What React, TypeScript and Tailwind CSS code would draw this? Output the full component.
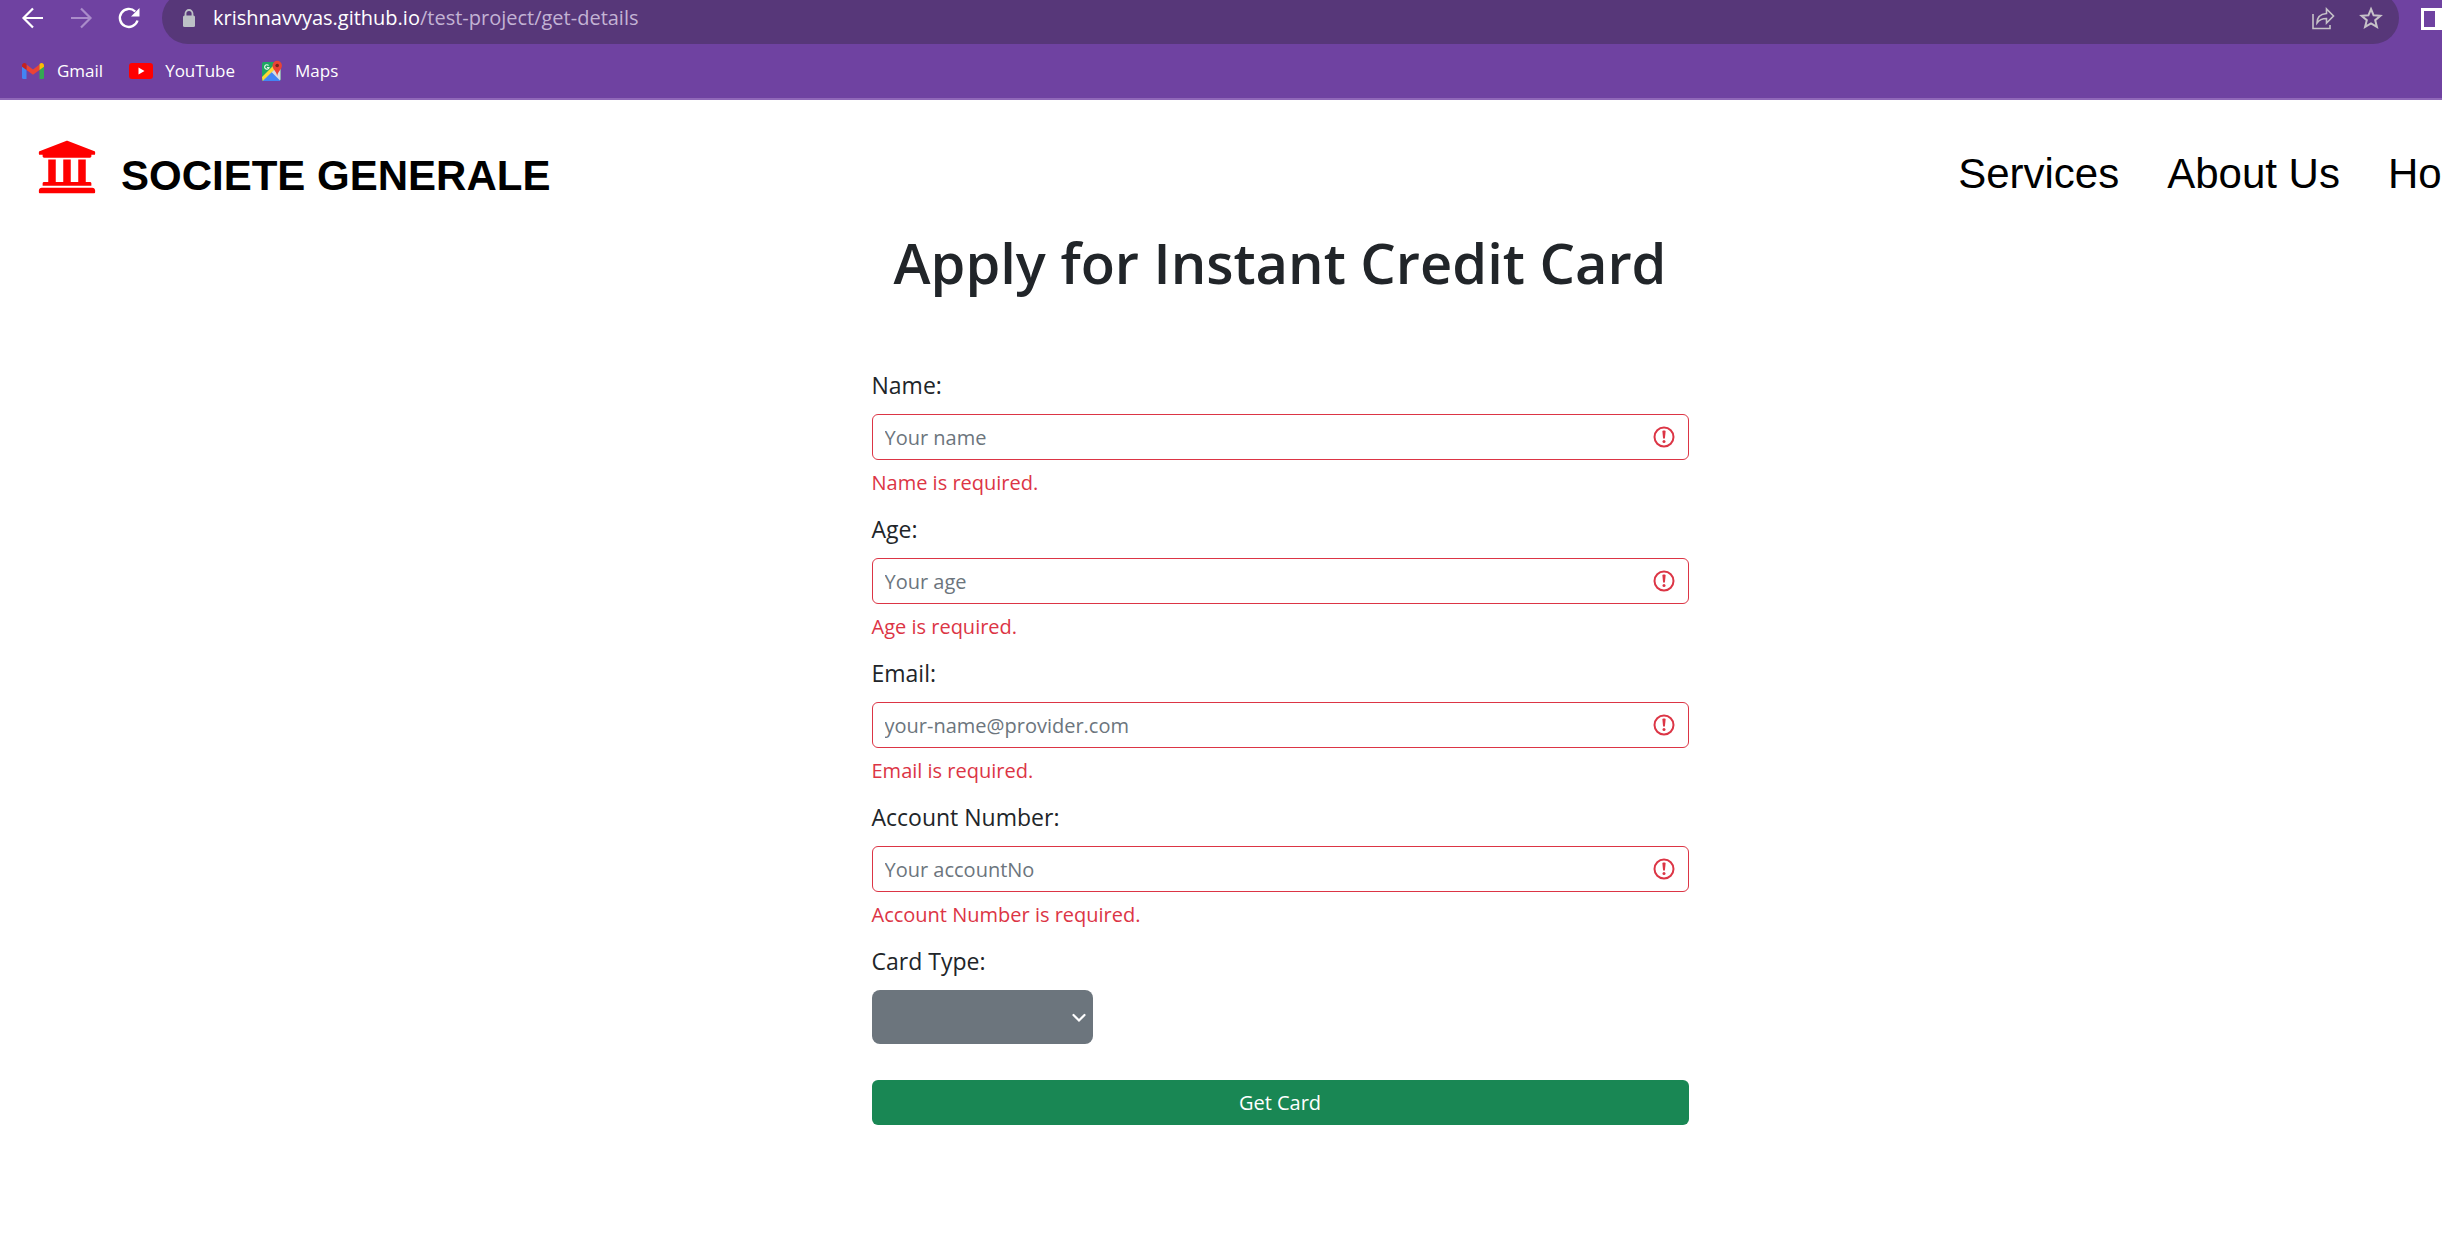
import React from "react";
import { FaUniversity } from "react-icons/fa";

const bookmarkText = "text-[17px] leading-6 text-white";

function BrowserBar() {
  return (
    <div className="h-[100px] overflow-hidden border-b-2 border-[#9068b8] bg-[#6f42a1] font-['Open_Sans',sans-serif]">
      <div className="flex h-11 items-end">
        <div className="flex h-[52px] w-[162px] shrink-0 items-center gap-6 pl-[21px]">
          <button aria-label="Back" className="h-6 w-6 shrink-0 text-white">
            <svg viewBox="0 0 24 24" fill="none" stroke="currentColor" strokeWidth="2.200">
              <path d="M22 12H3M12 2.500L2.500 12l9.500 9.500" />
            </svg>
          </button>
          <button aria-label="Forward" className="h-6 w-6 shrink-0 text-[#aa8cca]">
            <svg viewBox="0 0 24 24" fill="none" stroke="currentColor" strokeWidth="2.200">
              <path d="M2 12h19M12 2.500l9.500 9.500-9.500 9.500" />
            </svg>
          </button>
          <button aria-label="Reload" className="h-6 w-6 shrink-0 text-white">
            <svg viewBox="0 0 24 24" fill="none" stroke="currentColor" strokeWidth="2.400">
              <path d="M20.500 14.500A9 9 0 1 1 18.200 5.500" />
              <path d="M22.500 2v8.500H14z" fill="currentColor" stroke="none" />
            </svg>
          </button>
        </div>
        <div className="flex h-[52px] min-w-0 flex-1 items-center rounded-[26px] bg-[#573779] pl-[19px] pr-4">
          <svg className="h-5 w-4 shrink-0" viewBox="0 0 16 20">
            <path d="M4.500 9V5.500a3.500 3.500 0 0 1 7 0V9" fill="none" stroke="#bdc1c6" strokeWidth="1.800" />
            <rect x="2" y="7.500" width="12" height="11.500" rx="1.500" fill="#bdc1c6" />
          </svg>
          <div className="ml-4 flex-1 whitespace-nowrap text-[20px] leading-6 text-[#c3b3d4]">
            <span className="text-white">krishnavvyas.github.io</span>/test-project/get-details
          </div>
          <button aria-label="Share" className="mr-6 h-6 w-6 text-[#c6c2c8]">
            <svg viewBox="0 0 24 24" fill="none" stroke="currentColor" strokeWidth="1.600">
              <path d="M2 8v14.500h17V19" />
              <path d="M6 17c0-6 4-9 9.500-9.500V3l7 7-7 7v-4.500C11.500 12.500 8.500 13.500 6 17z" />
            </svg>
          </button>
          <button aria-label="Bookmark this page" className="h-6 w-6 text-[#c6c2c8]">
            <svg viewBox="0 0 24 24" fill="none" stroke="currentColor" strokeWidth="2">
              <path d="M12 3l2.600 6.300 6.800.5-5.200 4.400 1.700 6.700L12 17.300l-5.900 3.600 1.700-6.700L2.600 9.800l6.800-.5z" />
            </svg>
          </button>
        </div>
        <button aria-label="Side panel" className="mb-[14px] ml-[22px] h-[22px] w-[21px] shrink-0 text-white">
          <svg viewBox="0 0 21 22">
            <path fill="currentColor" fillRule="evenodd" d="M0 0h21v22H0zM3 3h11v16H3z" />
          </svg>
        </button>
      </div>
      <nav aria-label="Bookmarks" className="flex h-[53px] items-center gap-[26px] pl-[21px]">
        <a href="#gmail" className="flex items-center gap-3">
          <svg className="h-[18px] w-6" viewBox="0 0 24 18">
            <path d="M1 3.500l4.500 3.400V17H2.500A1.500 1.500 0 0 1 1 15.500z" fill="#4285f4" />
            <path d="M23 3.500l-4.500 3.400V17h3a1.500 1.500 0 0 0 1.500-1.500z" fill="#34a853" />
            <path d="M5.500 2.500L12 7.400l6.500-4.900v5.400L12 12.800 5.500 7.900z" fill="#ea4335" />
            <path d="M1 3.500C1 1 3.700.3 5.500 1.900v6L1 4.800z" fill="#c5221f" />
            <path d="M23 3.500c0-2.500-2.700-3.200-4.500-1.600v6L23 4.800z" fill="#fbbc04" />
          </svg>
          <span className={bookmarkText}>Gmail</span>
        </a>
        <a href="#youtube" className="flex items-center gap-3">
          <svg className="h-[18px] w-6" viewBox="0 0 24 18">
            <rect y="1" width="24" height="16" rx="3" fill="#f00" />
            <path d="M9.500 5.500v7l6-3.500z" fill="#fff" />
          </svg>
          <span className={bookmarkText}>YouTube</span>
        </a>
        <a href="#maps" className="flex items-center gap-3">
          <svg className="h-6 w-[22px]" viewBox="0 0 22 24">
            <rect x="1" y="3" width="18.500" height="19" rx="1.500" fill="#1fa463" />
            <path d="M2 21.500L19.500 4v16.500l-1 1.500H2z" fill="#dadce0" />
            <path d="M1.500 22L10.500 13 19.500 22z" fill="#4285f4" />
            <path d="M1 18L12 7l2.500 2.500L1.500 22z" fill="#fdd835" />
            <path d="M16.200 17c-.5-4.500-4.700-6.500-4.700-10.500a4.700 4.700 0 0 1 9.400 0c0 4-4.200 6-4.700 10.500z" fill="#ea4335" />
            <circle cx="16.200" cy="6.500" r="1.800" fill="#7b241c" />
            <path d="M7.500 6.500a2.200 2.200 0 1 0 .5 2H6" stroke="#e8f5e9" strokeWidth="1.200" fill="none" />
          </svg>
          <span className={bookmarkText}>Maps</span>
        </a>
      </nav>
    </div>
  );
}

function ErrorIcon() {
  return (
    <svg className="pointer-events-none absolute right-[14px] top-3 h-[22px] w-[22px]" viewBox="0 0 22 22" fill="#dc3545">
      <circle cx="11" cy="11" r="9.500" fill="none" stroke="#dc3545" strokeWidth="2" />
      <path d="M9.400 5.500q0-1 1-1h1.200q1 0 1 1l-.7 7h-1.800z" />
      <circle cx="11" cy="15.500" r="1.500" />
    </svg>
  );
}

const fields = [
  { id: "name", label: "Name", type: "text", hint: "Your name" },
  { id: "age", label: "Age", type: "text", hint: "Your age" },
  { id: "email", label: "Email", type: "email", hint: "your-name@provider.com" },
  { id: "account", label: "Account Number", type: "text", hint: "Your accountNo" },
];

const labelText = "block pb-3 text-[23px] leading-[34px]";

export default function App() {
  return (
    <div className="min-h-screen overflow-hidden bg-white">
      <BrowserBar />
      <div className="w-[calc(100%+118px)]">
        <header className="flex h-[108px] items-start justify-between pl-[37px] pt-[37px] font-['Liberation_Sans',Arial,sans-serif] text-black">
          <a href="#home" className="flex items-start gap-6">
            <FaUniversity className="h-[60px] w-[60px] text-[#f00]" />
            <span className="text-[42px] font-bold leading-[78px]">SOCIETE GENERALE</span>
          </a>
          <nav aria-label="Main" className="flex gap-12 pr-[60px] text-[42px] leading-[74px]">
            <a href="#services">Services</a>
            <a href="#about">About Us</a>
            <a href="#home">Home</a>
          </nav>
        </header>
        <main className="mx-auto w-[817px] max-w-full font-['Open_Sans',sans-serif] text-[#212529]">
          <h1 className="whitespace-nowrap pt-4 text-center text-[56px] font-semibold leading-[76px]">
            Apply for Instant Credit Card
          </h1>
          <form className="pt-[68px]" onSubmit={(e) => e.preventDefault()}>
            {fields.map((f) => (
              <div key={f.id} className="h-36">
                <label htmlFor={f.id} className={labelText}>
                  {f.label}:
                </label>
                <div className="relative">
                  <input
                    id={f.id}
                    type={f.type}
                    placeholder={f.hint}
                    className="block h-[46px] w-full rounded-md border border-[#dc3545] bg-white pl-3 pr-12 text-[20px] placeholder:text-[#6c757d]"
                  />
                  <ErrorIcon />
                </div>
                <p className="pt-2 text-[20px] leading-[30px] text-[#dc3545]">{f.label} is required.</p>
              </div>
            ))}
            <label htmlFor="card" className={labelText}>
              Card Type:
            </label>
            <div className="relative w-[221px]">
              <select id="card" defaultValue="" className="block h-[54px] w-full appearance-none rounded-lg bg-[#6c757d] px-3 text-[20px] text-white">
                <option value=""></option>
                <option value="visa">Visa</option>
                <option value="mastercard">Mastercard</option>
              </select>
              <svg className="pointer-events-none absolute right-[6px] top-5 h-4 w-4" viewBox="0 0 16 16" fill="none" stroke="#fff" strokeWidth="2.200" strokeLinecap="round">
                <path d="M2.500 5l5.500 5.500L13.500 5" />
              </svg>
            </div>
            <button type="submit" className="mt-9 block h-[45px] w-full rounded-md bg-[#198754] text-[20px] text-white">
              Get Card
            </button>
          </form>
        </main>
      </div>
    </div>
  );
}
